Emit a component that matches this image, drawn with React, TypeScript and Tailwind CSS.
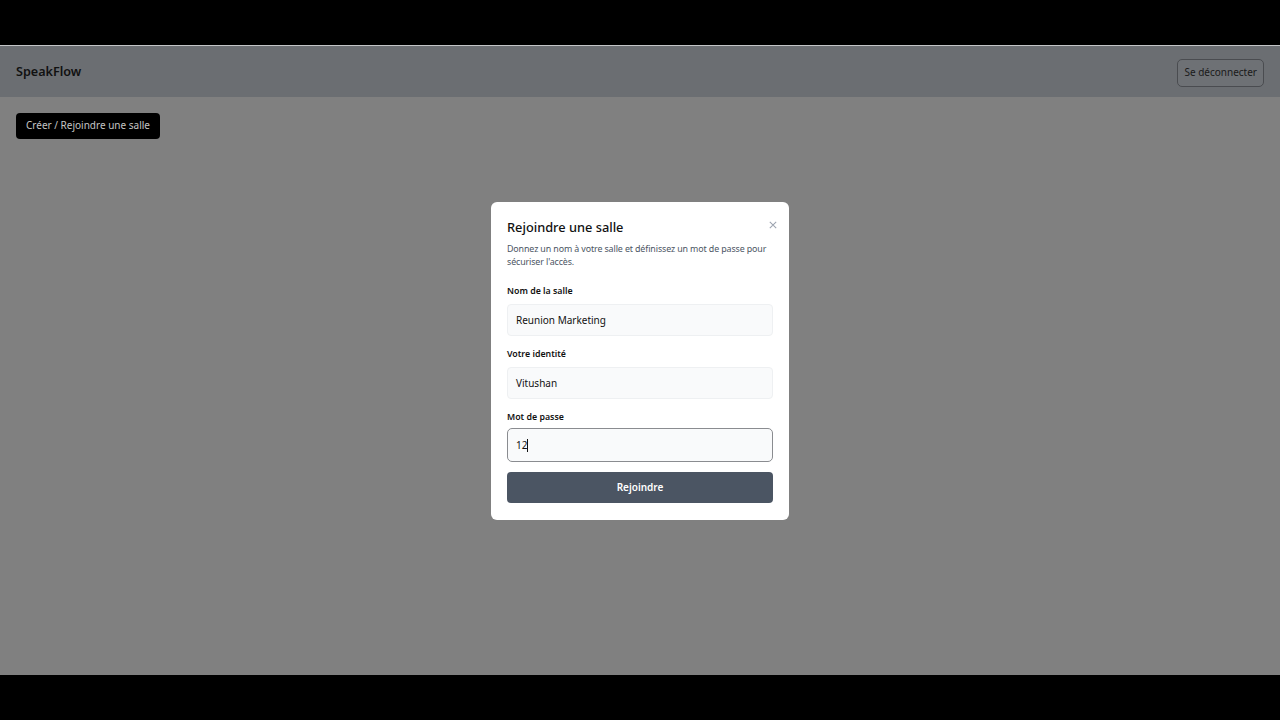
import React from "react";

export default function App() {
  const font = { fontFamily: '"Noto Sans", "Open Sans", sans-serif' };
  return (
    <div className="w-[1280px] h-[720px] bg-black flex flex-col overflow-hidden" style={font}>
      <div className="h-[45px] shrink-0 bg-black" />
      <div className="h-[1px] shrink-0 bg-[#c4c6c8]" />
      <div className="relative flex-1 bg-[#808080] flex flex-col">
        <header className="h-[51px] shrink-0 bg-[#6b6e72] flex items-center justify-between px-4 pt-[2px]">
          <span className="text-[12.6px] font-semibold text-[#111]">SpeakFlow</span>
          <button className="h-[28px] px-[6px] border border-[#4a4c50] rounded-[5px] text-[10px] text-[#1a1a1a] bg-[#6e7175]">
            Se déconnecter
          </button>
        </header>
        <div className="px-4 pt-[14px]">
          <button className="h-[26px] px-[10px] bg-black rounded-[4px] text-[10px] text-[#c4c4c4]">
            Créer / Rejoindre une salle
          </button>
        </div>
        <div className="absolute inset-0 flex items-start justify-center pt-[156px]">
          <div className="w-[298px] bg-white rounded-[6px] px-4 pt-[16px] pb-[17px] relative">
            <button className="absolute right-[12px] top-[19px] text-[#9ca3af]">
              <svg width="8" height="8" viewBox="0 0 10 10" stroke="currentColor" strokeWidth="1.3" fill="none">
                <path d="M1 1L9 9M9 1L1 9" />
              </svg>
            </button>
            <h2 className="text-[12.8px] font-medium text-[#111] leading-[19px]">Rejoindre une salle</h2>
            <p className="mt-[5px] text-[8.9px] leading-[13px] text-[#4b5563] tracking-[-0.12px] -mr-[2px]">
              Donnez un nom à votre salle et définissez un mot de passe pour sécuriser l'accès.
            </p>
            <div className="mt-[17px] flex flex-col">
              <label className="text-[8.8px] font-semibold text-[#111] leading-[12px]">Nom de la salle</label>
              <div className="mt-[7px] h-[32px] bg-[#f9fafb] border border-[#eef0f2] rounded-[4px] flex items-center px-[8px] text-[10px] text-[#111]">
                Reunion Marketing
              </div>
              <label className="mt-[12px] text-[8.8px] font-semibold text-[#111] leading-[12px]">Votre identité</label>
              <div className="mt-[7px] h-[32px] bg-[#f9fafb] border border-[#eef0f2] rounded-[4px] flex items-center px-[8px] text-[10px] text-[#111]">
                Vitushan
              </div>
              <label className="mt-[12px] text-[8.8px] font-semibold text-[#111] leading-[12px]">Mot de passe</label>
              <div className="mt-[5px] h-[34px] bg-[#f9fafb] border-[1.5px] border-[#8a8c90] rounded-[5px] flex items-center px-[8px] text-[10px] text-[#111]">
                12<span className="inline-block w-[1px] h-[13px] bg-[#111]" />
              </div>
              <button className="mt-[10px] h-[31px] bg-[#4b5563] rounded-[4px] text-[10px] font-semibold text-white">
                Rejoindre
              </button>
            </div>
          </div>
        </div>
      </div>
      <div className="h-[45px] shrink-0 bg-black" />
    </div>
  );
}
